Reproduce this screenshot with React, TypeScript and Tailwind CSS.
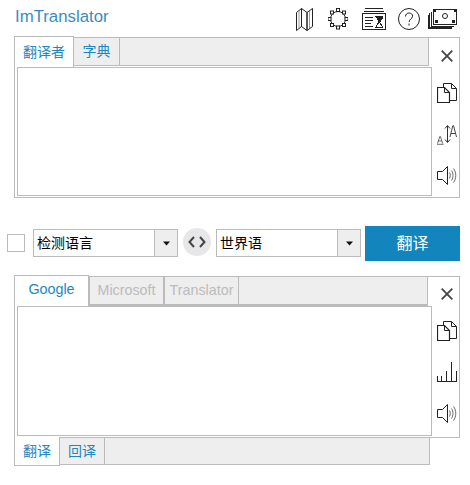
import React from "react";

const S = { fill: "none", stroke: "#222", strokeWidth: 1 } as const;

function MapIcon() {
  return (
    <svg width="17" height="23" viewBox="0 0 17 23" {...S} className="block">
      <path d="M.5 4.500 5.500.5v18l-5 4zM5.500.5l5.500 4v18l-5.500-4zM11 4.500l5.500-4v18l-5.500 4z" />
      <path d="M3 3v17M13.500 3v17" stroke="#999" />
    </svg>
  );
}
function GearIcon() {
  const pts = [[10, 2], [16, 4.5], [18.5, 11], [16, 17], [10, 19.5], [4, 17], [1.5, 11], [4, 4.5]];
  return (
    <svg width="20" height="22" viewBox="0 0 20 22" {...S} className="block">
      <circle cx="10" cy="11" r="7.500" />
      {pts.map(([x, y], i) => (
        <rect key={i} x={x - 1.5} y={y - 1.5} width="3" height="3" fill="#fff" />
      ))}
    </svg>
  );
}
function NewsIcon() {
  return (
    <svg width="24" height="22" viewBox="0 0 24 22" {...S} shapeRendering="crispEdges" className="block">
      <path d="M3 .5h18M2 3.500h20" />
      <rect x=".5" y="5.500" width="23" height="16" />
      <path d="M3 9h8M3 12h8M3 15h6M3 18h8" />
      <path d="M13 8.500h8M13 19.500h8M14.500 9l6 10M20 9l-6 10" />
      <path d="M15 9h5v2l-2.500 3-2.500-3z" fill="#222" />
    </svg>
  );
}
function HelpIcon() {
  return (
    <svg width="22" height="22" viewBox="0 0 22 22" {...S} className="block">
      <circle cx="11" cy="11" r="10.500" />
      <path d="M7.500 8.500c0-2.200 1.600-3.500 3.600-3.500s3.500 1.300 3.500 3.200c0 2.600-3.500 2.800-3.500 5.800" />
      <path d="M11 15.500v2" />
    </svg>
  );
}
function MoneyIcon() {
  return (
    <svg width="30" height="20" viewBox="0 0 30 20" {...S} shapeRendering="crispEdges" className="block">
      <rect x="5.500" y=".5" width="23" height="14.500" />
      <path d="M3.500 2.500v14.500h22M1.500 4v14h22M.5 5.500v14h23" />
      <circle cx="17" cy="7" r="2.500" shapeRendering="auto" />
      <rect x="6" y="1" width="2" height="2" fill="#222" stroke="none" />
      <rect x="26" y="1" width="2" height="2" fill="#222" stroke="none" />
      <rect x="7" y="11" width="3" height="3" fill="#222" stroke="none" />
      <rect x="24" y="11" width="3" height="3" fill="#222" stroke="none" />
    </svg>
  );
}
function CloseIcon() {
  return (
    <svg width="12" height="12" viewBox="0 0 12 12" fill="none" stroke="#444" strokeWidth="1.800" className="block">
      <path d="M.7.7l10.600 10.600M11.300.7.7 11.300" />
    </svg>
  );
}
function CopyIcon() {
  return (
    <svg width="20" height="20" viewBox="0 0 20 20" {...S} className="block">
      <path d="M6.500 4V.5h8l5 5v12h-7" />
      <path d="M14.500.5v5h5" />
      <path d="M.5 4.500h7l5 5v10H.5z" fill="#fff" strokeWidth="1.200" />
      <path d="M7.500 4.500v5h5" />
    </svg>
  );
}
function TextSizeIcon() {
  return (
    <svg width="20" height="20" viewBox="0 0 20 20" fill="none" stroke="#333" strokeWidth="1" className="block">
      <path d="M10.500 1v16M8 3.500l2.500-3 2.500 3M8 14.500l2.500 3 2.500-3" />
      <path d="M13 12 15.800.8h.8L19.500 12M14 8.500h4.500" strokeWidth=".9" />
      <path d="M.5 18.500l2.300-7h.6l2.300 7M1.500 16h3M0 19.300h6.500" stroke="#444" strokeWidth=".8" />
    </svg>
  );
}
function SpeakerIcon() {
  return (
    <svg width="20" height="19" viewBox="0 0 20 19" {...S} className="block">
      <path d="M.5 5.500h5l5-5v18l-5-5h-5z" />
      <path d="M12.500 6.500c1 2 1 4 0 6M14.500 4.500c2 3 2 7 0 10M16.500 2.500c3 4 3 10 0 14" stroke="#666" />
    </svg>
  );
}
function BarsIcon() {
  return (
    <svg width="20" height="20" viewBox="0 0 20 20" {...S} shapeRendering="crispEdges" className="block">
      <path d="M0 19.500h20M.5 19v-5M4.500 19v-5M9.500 19V9M14.500 19V0M19.500 19V9" />
    </svg>
  );
}
function Caret() {
  return (
    <svg width="7" height="5" viewBox="0 0 7 5" className="block">
      <path d="M0 .5h7L3.500 4.500z" fill="#111" />
    </svg>
  );
}

function LangSelect({ label, w }: { label: string; w: string }) {
  return (
    <div className={`${w} h-[28px] mt-[3px] flex border border-[#bbbbbb] bg-white`}>
      <div className="flex-1 pl-[3px] text-[14px] leading-[26px] text-black">{label}</div>
      <div className="w-[23px] bg-[#eeeeee] border-l border-[#bbbbbb] flex items-center justify-center">
        <Caret />
      </div>
    </div>
  );
}

export default function App() {
  const font = "font-['Liberation_Sans','Noto_Sans_CJK_SC',sans-serif]";
  const tab = "bg-[#eeeeee] border border-[#bbbbbb] flex items-center justify-center";
  return (
    <div className={`w-[470px] h-[485px] bg-white overflow-hidden ${font}`}>
      <header className="h-[37px] flex pt-[8px] pl-[15px]">
        <div className="text-[16.800px] leading-[18px] text-[#3a8cc0] w-[281px]">ImTranslator</div>
        <div className="flex items-start h-[24px]">
          <div className="w-[32px]"><MapIcon /></div>
          <div className="w-[34px]"><GearIcon /></div>
          <div className="w-[36px]"><NewsIcon /></div>
          <div className="w-[30px]"><HelpIcon /></div>
          <div className="pt-[1px]"><MoneyIcon /></div>
        </div>
      </header>

      <section className="ml-[14px] w-[446px] h-[161px] border border-[#bbbbbb] flex">
        <div className="w-[417px]">
          <div className="flex h-[29px] -mt-px -ml-px text-[14px] text-[#1c87c0]">
            <div className="w-[60px] h-[31px] -mt-px shrink-0 bg-white border border-b-0 border-[#bbbbbb] flex items-center justify-center relative">翻译者</div>
            <div className={`w-[47px] h-[29px] -ml-px shrink-0 ${tab}`}>字典</div>
            <div className={`w-[310px] h-[29px] -ml-px shrink-0 ${tab}`} />
          </div>
          <div className="ml-[2px] mt-[1px] w-[415px] h-[129px] border border-[#bbbbbb]" />
        </div>
        <div className="flex-1 flex flex-col items-center pt-[12px] pl-[3px]">
          <CloseIcon />
          <div className="mt-[21px]"><CopyIcon /></div>
          <div className="mt-[22px]"><TextSizeIcon /></div>
          <div className="mt-[21px]"><SpeakerIcon /></div>
        </div>
      </section>

      <div className="h-[35px] mt-[28px] ml-[7px] flex items-start">
        <div className="w-[18px] h-[18px] mt-[8px] border border-[#bbbbbb] mr-[8px]" />
        <LangSelect label="检测语言" w="w-[145px]" />
        <div className="w-[28px] h-[28px] mt-[2px] mx-[5px] shrink-0 rounded-full bg-[#e7e7e9] flex items-center justify-center">
          <svg width="18" height="12" viewBox="0 0 18 12" fill="none" stroke="#444" strokeWidth="2" className="block">
            <path d="M6 1 1.500 6 6 11M12 1l4.500 5L12 11" />
          </svg>
        </div>
        <LangSelect label="世界语" w="w-[145px]" />
        <button className="w-[95px] h-[35px] ml-[4px] bg-[#1286bc] text-white text-[16px]">翻译</button>
      </div>

      <section className="ml-[14px] mt-[15px] w-[446px] h-[162px] border border-[#bbbbbb] flex">
        <div className="w-[417px]">
          <div className="flex h-[30px] -mt-px -ml-px text-[14.300px]">
            <div className="w-[75px] h-[31px] -mt-px shrink-0 bg-white border border-b-0 border-[#bbbbbb] flex items-center justify-center text-[#1c87c0] relative pb-[2px]">Google</div>
            <div className={`w-[75px] h-[30px] shrink-0 border-b-2 text-[#bbbbbb] ${tab}`}>Microsoft</div>
            <div className={`w-[75px] h-[30px] shrink-0 border-b-2 text-[#bbbbbb] ${tab}`}>Translator</div>
            <div className={`w-[190px] h-[30px] -ml-px shrink-0 border-b-2 ${tab}`} />
          </div>
          <div className="ml-[2px] w-[415px] h-[130px] border border-[#bbbbbb]" />
        </div>
        <div className="flex-1 flex flex-col items-center pt-[11px] pl-[3px]">
          <CloseIcon />
          <div className="mt-[21px]"><CopyIcon /></div>
          <div className="mt-[21px]"><BarsIcon /></div>
          <div className="mt-[22px]"><SpeakerIcon /></div>
        </div>
      </section>

      <div className="ml-[14px] flex h-[28px] text-[14px] text-[#1c87c0]">
        <div className="w-[46px] -mt-px h-[29px] shrink-0 bg-white border border-t-0 border-[#bbbbbb] flex items-center justify-center relative">翻译</div>
        <div className={`w-[46px] -ml-px -mt-px h-[28px] shrink-0 ${tab}`}>回译</div>
        <div className={`w-[326px] -ml-px -mt-px h-[28px] shrink-0 ${tab}`} />
      </div>
    </div>
  );
}
